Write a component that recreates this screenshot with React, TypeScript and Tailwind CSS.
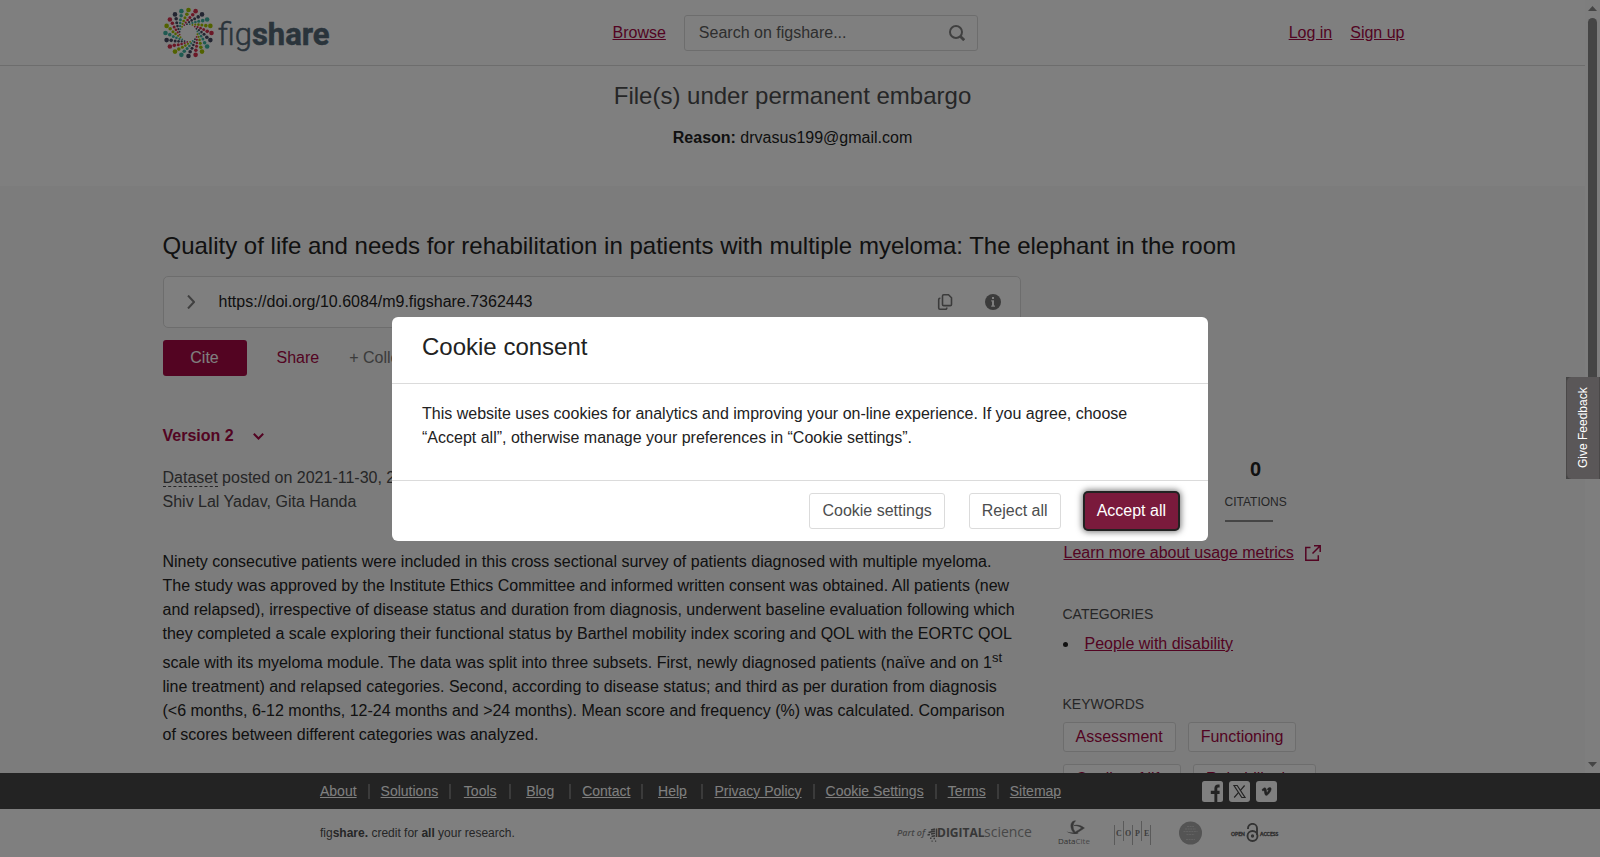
import { clsx } from "clsx";
import type { ReactNode } from "react";

const footerLinks = [
  "About",
  "Solutions",
  "Tools",
  "Blog",
  "Contact",
  "Help",
  "Privacy Policy",
  "Cookie Settings",
  "Terms",
  "Sitemap",
];

const keywords = ["Assessment", "Functioning", "Quality of life", "Rehabilitation"];

const swirlColors = ["#a5c400", "#d7304f", "#464b63", "#3fb5a3"];

// distance from the centre, dot radius, degrees the dot trails behind its arm
const swirlRings = [
  [23, 2.3, 0],
  [18.8, 1.8, 5],
  [15.6, 1.5, 13],
  [13, 1.3, 22],
  [10.8, 1.1, 33],
  [9, 0.9, 46],
];

function FigshareLogo() {
  return (
    <svg width="170" height="52" viewBox="0 0 170 52" role="img" aria-label="figshare">
      {Array.from({ length: 20 }).map((_, arm) =>
        swirlRings.map(([distance, r, trail]) => {
          const angle = ((arm * 18 - 90 - trail) * Math.PI) / 180;
          return (
            <circle
              key={`${arm}-${distance}`}
              cx={25.5 + Math.cos(angle) * distance}
              cy={26 + Math.sin(angle) * distance}
              r={r}
              fill={swirlColors[arm % 4]}
            />
          );
        }),
      )}
      <text
        x="55"
        y="38"
        fontFamily="Roboto, sans-serif"
        fontSize="31"
        fill="#556877"
        stroke="#556877"
        strokeWidth="0.5"
      >
        <tspan fontWeight="300">fig</tspan>
        <tspan fontWeight="700">share</tspan>
      </text>
    </svg>
  );
}

function Link({ children, className }: { children: ReactNode; className?: string }) {
  return (
    <a href="#" className={clsx("text-[#a60845] underline", className)}>
      {children}
    </a>
  );
}

function Header() {
  return (
    <header className="border-b border-[#dbdbdb] bg-white">
      <div className="mx-auto flex h-[65px] w-full max-w-[1260px] items-center pr-[18px]">
        <a href="#" className="w-[450px]">
          <FigshareLogo />
        </a>
        <Link>Browse</Link>
        <form className="ml-[18px] flex h-9 w-[294px] items-center rounded-[3px] border border-[#dbdbdb] pr-3 pl-3.5">
          <input
            type="text"
            aria-label="Search on figshare"
            placeholder="Search on figshare..."
            className="min-w-0 flex-1 outline-none placeholder:text-[#5c5c5c]"
          />
          <button type="button" aria-label="Search">
            <svg width="16" height="16" viewBox="0 0 16 16" fill="none" stroke="#808080" strokeWidth="2">
              <circle cx="7" cy="7" r="6" />
              <path d="M11.2 11.2 15.2 15.2" strokeWidth="2.8" />
            </svg>
          </button>
        </form>
        <nav className="ml-auto flex gap-[18px]">
          <Link>Log in</Link>
          <Link>Sign up</Link>
        </nav>
      </div>
    </header>
  );
}

function DoiBox() {
  return (
    <div className="mt-3.5 flex h-[52px] items-center rounded-[5px] border border-[#dbdbdb] bg-white pr-[19px] pl-[23px]">
      <button type="button" aria-label="Expand" className="mr-6">
        <svg width="8" height="14" viewBox="0 0 8 14" fill="none" stroke="#808080" strokeWidth="2">
          <path d="M1 0.5 7 7 1 13.5" />
        </svg>
      </button>
      <span className="flex-1">https://doi.org/10.6084/m9.figshare.7362443</span>
      <button type="button" aria-label="Copy" className="mr-8">
        <svg width="16" height="16" viewBox="0 0 16 16" fill="none" stroke="#777" strokeWidth="1.6">
          <path d="M6.7 0.8h4.8l3 3v6.6a1.2 1.2 0 0 1-1.2 1.2H6.7a1.2 1.2 0 0 1-1.2-1.2V2a1.2 1.2 0 0 1 1.2-1.2Z" />
          <path d="M3.4 4.2H2.9a1.2 1.2 0 0 0-1.2 1.2v8.6a1.2 1.2 0 0 0 1.2 1.2h5.7a1.2 1.2 0 0 0 1.2-1.2v-.4" />
        </svg>
      </button>
      <button type="button" aria-label="Information">
        <svg width="16" height="16" viewBox="0 0 16 16">
          <circle cx="8" cy="8" r="8" fill="#777" />
          <path d="M7 3h2v2H7zM6.2 6.3H9v5.2h1v1.3H6.2v-1.3H7V7.6h-.8z" fill="#fff" />
        </svg>
      </button>
    </div>
  );
}

function Article() {
  return (
    <div className="w-[858px] shrink-0">
      <DoiBox />
      <div className="mt-3 flex h-9 items-center">
        <button type="button" className="h-9 w-[84px] rounded-[3px] bg-[#a60845] text-white">
          Cite
        </button>
        <button type="button" className="ml-[30px] text-[#a60845]">
          Share
        </button>
        <button type="button" className="ml-[30px] text-[#777]">
          + Collect
        </button>
      </div>
      <button type="button" className="mt-12 flex items-center font-bold text-[#a60845]">
        Version 2
        <svg className="ml-[19px]" width="11" height="7" viewBox="0 0 11 7" fill="none" stroke="#a60845" strokeWidth="2">
          <path d="M0.8 0.8 5.5 5.5 10.2 0.8" />
        </svg>
      </button>
      <div className="mt-[18px] text-[#4c4d4e]">
        <p>
          <span className="border-b border-dashed border-[#4c4d4e]">Dataset</span> posted on 2021-11-30, 2
        </p>
        <p>
          <span>Shiv Lal Yadav</span>, <span>Gita Handa</span>
        </p>
      </div>
      <p className="mt-9">
        Ninety consecutive patients were included in this cross sectional survey of patients diagnosed
        with multiple myeloma. The study was approved by the Institute Ethics Committee and informed
        written consent was obtained. All patients (new and relapsed), irrespective of disease status
        and duration from diagnosis, underwent baseline evaluation following which they completed a
        scale exploring their functional status by Barthel mobility index scoring and QOL with the
        EORTC QOL scale with its myeloma module. The data was split into three subsets. First, newly
        diagnosed patients (naïve and on 1
        <sup className="static align-super text-[13px] leading-6">st</sup> line treatment) and relapsed
        categories. Second, according to disease status; and third as per duration from diagnosis
        (&lt;6 months, 6-12 months, 12-24 months and &gt;24 months). Mean score and frequency (%) was
        calculated. Comparison of scores between different categories was analyzed.
      </p>
    </div>
  );
}

function Sidebar() {
  return (
    <aside className="min-w-0 flex-1 pt-[195px]">
      <div className="ml-[162px] w-fit">
        <div className="text-center text-xl leading-6 font-bold">0</div>
        <div className="mt-[9px] text-xs leading-6 text-[#4c4d4e]">CITATIONS</div>
        <div className="mt-1.5 h-0.5 w-12 bg-[#8a8a8a]" />
      </div>
      <a href="#" className="mt-[19px] ml-px flex items-center gap-[11px] text-[#a60845]">
        <span className="underline">Learn more about usage metrics</span>
        <svg width="16" height="16" viewBox="0 0 16 16" fill="none" stroke="#a60845" strokeWidth="1.5">
          <path d="M5.5 2.6H.8v12.6h12.5v-5M9 .8h6.2V7M15 1 7.5 8.5" />
        </svg>
      </a>
      <h3 className="mt-[37px] text-sm leading-6 text-[#4c4d4e]">CATEGORIES</h3>
      <ul className="mt-1.5 list-inside list-disc">
        <li>
          <Link>People with disability</Link>
        </li>
      </ul>
      <h3 className="mt-9 text-sm leading-6 text-[#4c4d4e]">KEYWORDS</h3>
      <div className="mt-1.5 flex w-[260px] flex-wrap gap-3">
        {keywords.map((word) => (
          <a
            key={word}
            href="#"
            className="flex h-[30px] items-center rounded-[3px] border border-[#dbdbdb] bg-white px-3 text-[#a60845]"
          >
            {word}
          </a>
        ))}
      </div>
    </aside>
  );
}

function ScrollBar() {
  return (
    <div className="flex w-[15px] shrink-0 flex-col items-center bg-[#fcfcfc] py-1.5">
      <svg width="9" height="5" viewBox="0 0 9 5" fill="#8a8a8a">
        <path d="M4.5 0 9 5H0z" />
      </svg>
      <div className="mt-[7px] h-[420px] w-[9px] rounded-full bg-[#8a8a8a]" />
      <svg className="mt-auto" width="9" height="5" viewBox="0 0 9 5" fill="#8a8a8a">
        <path d="M0 0h9L4.5 5z" />
      </svg>
    </div>
  );
}

function SocialLinks() {
  return (
    <div className="ml-auto flex gap-1.5 pr-[3px]">
      <a href="#" aria-label="Facebook">
        <svg width="21" height="21" viewBox="0 0 21 21">
          <rect width="21" height="21" rx="2.5" fill="#fff" />
          <path
            d="M12.4 21v-8H8.8V9.8h3.600V7.300c0-2.600 1.400-3.900 3.700-3.900h1.500v3h-1c-1.100 0-1.300.5-1.300 1.300v2.100h2.300V13h-2.300v8z"
            fill="#464646"
          />
        </svg>
      </a>
      <a href="#" aria-label="X">
        <svg width="21" height="21" viewBox="0 0 21 21">
          <rect width="21" height="21" rx="3" fill="#fff" />
          <path d="M5 4.5h3.2L16 16.5h-3.2z" fill="none" stroke="#464646" strokeWidth="1.2" />
          <path d="M15.6 4.5 11.2 9.6M9.6 11.4 5.2 16.5" stroke="#464646" strokeWidth="1.2" />
        </svg>
      </a>
      <a href="#" aria-label="Vimeo">
        <svg width="21" height="21" viewBox="0 0 21 21">
          <rect width="21" height="21" rx="3" fill="#fff" />
          <path
            d="M6 8.6c1-.9 2.1-1.9 2.9-1.9 1.7 0 1.5 4.7 2.3 4.7.4 0 1.3-1.6 1.2-2.2-.1-.6-.8-.5-1.2-.3.5-1.7 1.5-2.4 2.6-2.3 2.5.1 1 3.6-.7 5.7-1 1.3-2 2.2-2.9 2.2-1.8 0-1.6-5-2.4-5-.3 0-.7.2-1.1.5z"
            fill="#464646"
            stroke="#464646"
            strokeWidth="0.5"
          />
        </svg>
      </a>
    </div>
  );
}

function PartnerLogos() {
  return (
    <div className="ml-auto flex items-center gap-6">
      <svg width="137" height="24" viewBox="0 0 137 24" role="img" aria-label="Digital Science" fontFamily="Open Sans, sans-serif">
        <text x="0" y="15" fontSize="9" fontStyle="italic" fontWeight="600" fill="#8a8a8a">
          Part of
        </text>
        <path
          d="M39.5 7.5V16M34 9l4-1M31.500 11.5l6.500-1.5M30.500 14l2.500-.5M34 13l4-.7M34.500 15.500l3.500-.8"
          stroke="#6e6e6e"
          strokeWidth="1.5"
        />
        <path d="M33 16.5h1.500V18H33zM36.500 16.800H38v1.500h-1.500zM34.500 19.500h1.200v1.200h-1.200zM38 19.500h1.200v1.200H38z" fill="#777" />
        <text x="40" y="16" fontSize="12" fontWeight="700" fill="#6e6e6e">
          DIGITAL
        </text>
        <text x="87" y="16" fontSize="14" fontWeight="400" fill="#8f8f8f">
          science
        </text>
      </svg>
      <svg width="32" height="26" viewBox="0 0 32 26" role="img" aria-label="DataCite">
        <path
          d="M17.5.8C13 1 12.2 5 13.5 9c.8 2.4 2.2 4 4.5 4.6 1.8-1.4 5.5-3.5 8.4-5.6C23 5.5 19.5 4.5 16 5.5c3-.1 6 .8 7.6 2.5-2 1.6-4.300 2.800-6.200 3.900C14.600 10 14 4 17.500.8Z"
          fill="#707070"
          stroke="#707070"
          strokeWidth="0.6"
        />
        <path d="M8.5 11.5c3 1.2 7 1.5 10.5.3l1.5 1.7c-4.500 1-9.200.2-12-2z" fill="#707070" />
        <text x="0" y="24" fontFamily="Open Sans, sans-serif" fontSize="8" fill="#666">
          Data<tspan fill="#8f8f8f">Cite</tspan>
        </text>
      </svg>
      <svg width="37" height="24" viewBox="0 0 37 24" role="img" aria-label="COPE">
        <path d="M.5 4v20M9.5 0v20M18.5 4v20M27.5 0v20M36.5 4v20" stroke="#b5b5b5" strokeWidth="1" />
        <g fontFamily="Liberation Serif, serif" fontSize="8" fontWeight="700" fill="#7a7a7a">
          <text x="2" y="15">
            C
          </text>
          <text x="11" y="15">
            O
          </text>
          <text x="21" y="15">
            P
          </text>
          <text x="30" y="15">
            E
          </text>
        </g>
      </svg>
      <svg className="ml-1" width="23" height="24" viewBox="0 0 23 24" aria-hidden="true">
        <circle cx="11.5" cy="12" r="11.5" fill="#a8a8a8" />
        <path
          d="M8 5.5h7M6 8h11M4.5 10.500h14M7.500 13.500h8M7 18.500h9"
          stroke="#c4c4c4"
          strokeWidth="1.2"
          strokeDasharray="2 .6"
        />
      </svg>
      <svg className="ml-1" width="50" height="20" viewBox="0 0 50 20" role="img" aria-label="Open Access">
        <g fontFamily="Lato, sans-serif" fontSize="5" fontWeight="900" fill="#5c5c5c" stroke="#5c5c5c" strokeWidth="0.3">
          <text x="1" y="13">
            OPEN
          </text>
          <text x="30" y="13">
            ACCESS
          </text>
        </g>
        <g fill="none" stroke="#666" strokeWidth="1.9">
          <circle cx="22.5" cy="13" r="5" />
          <path d="M18 6V5.200a4.500 4.300 0 0 1 9 0V12" />
        </g>
        <circle cx="22.5" cy="13" r="1.7" fill="#666" />
      </svg>
    </div>
  );
}

function Footer() {
  return (
    <footer className="shrink-0">
      <div className="bg-[#464646]">
        <div className="mx-auto flex h-9 w-full max-w-[960px] items-center">
          <nav className="flex text-sm leading-[15px]">
            {footerLinks.map((label, i) => (
              <div
                key={label}
                className={clsx(
                  "text-center",
                  i === 0 ? "pr-[11px]" : "min-w-[60px] px-[11px]",
                  i < footerLinks.length - 1 && "border-r-2 border-[#777]",
                )}
              >
                <a href="#" className="text-white underline">
                  {label}
                </a>
              </div>
            ))}
          </nav>
          <SocialLinks />
        </div>
      </div>
      <div className="bg-white">
        <div className="mx-auto flex h-12 w-full max-w-[960px] items-center text-xs text-[#4c4d4e]">
          <p>
            fig<b>share.</b> credit for <b>all</b> your research.
          </p>
          <PartnerLogos />
        </div>
      </div>
    </footer>
  );
}

function CookieConsent() {
  return (
    <div className="fixed inset-0 z-10 flex items-center justify-center bg-black/50">
      <div
        role="dialog"
        aria-labelledby="cookie-title"
        className="w-full max-w-[816px] rounded-md bg-white text-[#222]"
      >
        <h2 id="cookie-title" className="border-b border-[#dbdbdb] px-[30px] pt-3.5 pb-5 text-2xl leading-8">
          Cookie consent
        </h2>
        <p className="px-[30px] pt-[18px] pb-[30px]">
          This website uses cookies for analytics and improving your on-line experience. If you agree,
          choose “Accept all”, otherwise manage your preferences in “Cookie settings”.
        </p>
        <div className="flex justify-end gap-6 border-t border-[#dbdbdb] px-[30px] py-3">
          <button type="button" className="h-9 rounded-[3px] border border-[#dbdbdb] px-3 text-[#4c4d4e]">
            Cookie settings
          </button>
          <button type="button" className="h-9 rounded-[3px] border border-[#dbdbdb] px-3 text-[#4c4d4e]">
            Reject all
          </button>
          <button
            type="button"
            className="h-9 rounded-[3px] bg-[#7a1a3c] px-3 text-white shadow-[0_0_0_2px_#222,0_0_6px_3px_#777]"
          >
            Accept all
          </button>
        </div>
      </div>
    </div>
  );
}

function FeedbackTab() {
  return (
    <div className="fixed top-[377px] right-0 z-20 bg-[#444]">
      <button
        type="button"
        className="flex h-[102px] w-[34px] rotate-180 items-center justify-center rounded-r-[5px] border-y border-[#4a4848] bg-[#5a5758] text-xs text-white [writing-mode:vertical-rl]"
      >
        Give Feedback
      </button>
    </div>
  );
}

export default function App() {
  return (
    <div className="flex h-screen flex-col overflow-hidden font-['Liberation_Sans',Arial,sans-serif] text-base leading-6 text-[#222]">
      <div className="flex min-h-0 flex-1">
        <div className="min-w-0 flex-1 overflow-hidden bg-[#f8f8f8]">
          <Header />
          <section className="bg-white pt-3.5 pb-9 text-center">
            <h2 className="text-2xl leading-8 text-[#4c4d4e]">File(s) under permanent embargo</h2>
            <p className="mt-3.5">
              <b>Reason:</b> drvasus199@gmail.com
            </p>
          </section>
          <main className="mx-auto w-full max-w-[1260px] pt-11">
            <h1 className="text-2xl leading-8">
              Quality of life and needs for rehabilitation in patients with multiple myeloma: The
              elephant in the room
            </h1>
            <div className="flex gap-[42px]">
              <Article />
              <Sidebar />
            </div>
          </main>
        </div>
        <ScrollBar />
      </div>
      <Footer />
      <CookieConsent />
      <FeedbackTab />
    </div>
  );
}
